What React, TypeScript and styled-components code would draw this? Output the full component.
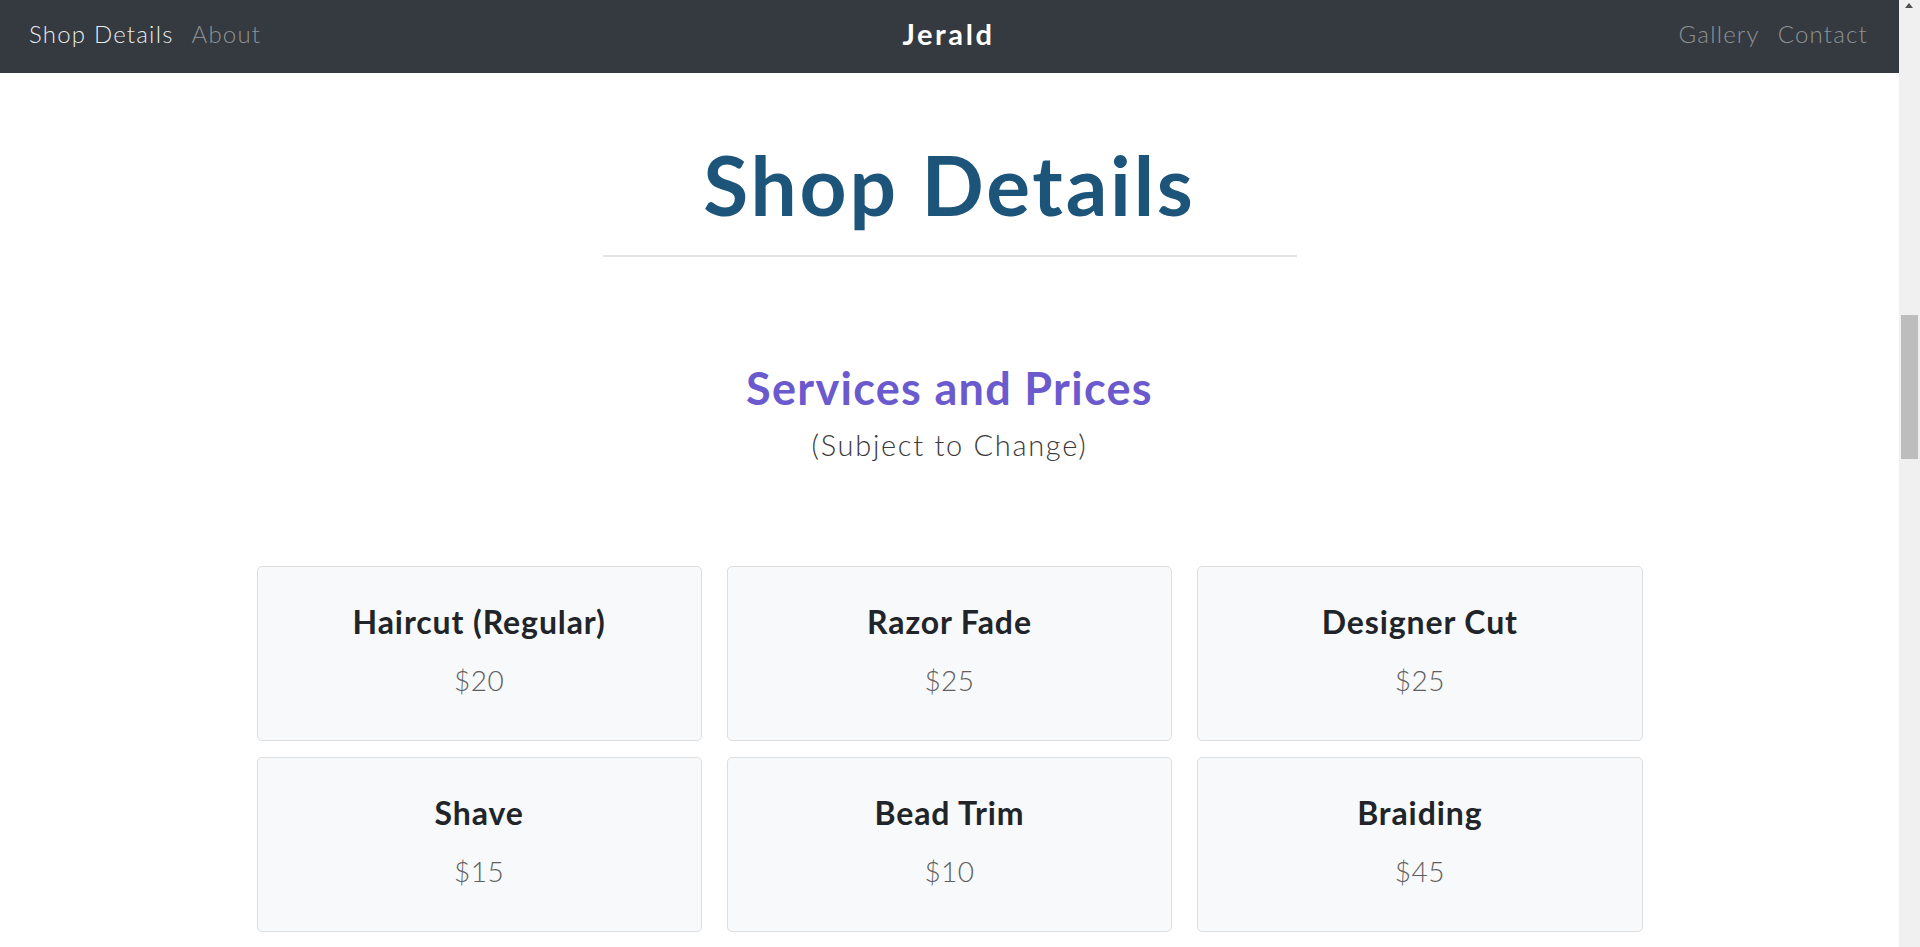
import React from "react";
import styled, { createGlobalStyle } from "styled-components";

const GlobalStyle = createGlobalStyle`
  body {
    margin: 0;
    padding-right: 21px;
    font-family: "Lato", "Liberation Sans", sans-serif;
    background: #ffffff;
    color: #212529;
  }
  * { box-sizing: border-box; }
`;

const ScrollTrack = styled.aside`
  position: fixed;
  top: 0;
  right: 0;
  width: 21px;
  height: 100vh;
  background: #f0f0f0;
`;

const ScrollArrow = styled.span`
  position: absolute;
  top: 3px;
  left: 6px;
  width: 0;
  height: 0;
  border-left: 4.5px solid transparent;
  border-right: 4.5px solid transparent;
  border-bottom: 5px solid #505050;
`;

const ScrollThumb = styled.span`
  position: absolute;
  top: 315px;
  left: 2px;
  width: 17px;
  height: 144px;
  background: #bdbdbd;
`;

const NavBar = styled.nav`
  height: 73px;
  background: #343a40;
  display: grid;
  grid-template-columns: 1fr auto 1fr;
  align-items: center;
  padding: 0 31px 6px 29px;
`;

const NavGroup = styled.div<{ $end?: boolean }>`
  display: flex;
  gap: 18px;
  justify-content: ${(p) => (p.$end ? "flex-end" : "flex-start")};
`;

const NavLink = styled.a<{ $active?: boolean }>`
  font-size: 24px;
  font-weight: 300;
  letter-spacing: 1.2px;
  text-decoration: none;
  color: ${(p) => (p.$active ? "rgba(255,255,255,0.92)" : "rgba(255,255,255,0.45)")};
`;

const Brand = styled.a`
  font-size: 29px;
  font-weight: 700;
  letter-spacing: 2.6px;
  color: #ffffff;
  text-decoration: none;
`;

const Main = styled.main`
  display: flex;
  flex-direction: column;
  align-items: center;
  padding-top: 62px;
`;

const PageTitle = styled.h1`
  margin: 0;
  font-size: 82px;
  line-height: 1.2;
  font-weight: 700;
  letter-spacing: 2.8px;
  color: #1d5479;
`;

const Rule = styled.hr`
  width: 694px;
  margin: 22px 0 0;
  border: 0;
  border-top: 2px solid #e4e4e4;
`;

const SectionTitle = styled.h2`
  margin: 104px 0 0;
  font-size: 45px;
  line-height: 1.2;
  font-weight: 700;
  letter-spacing: 1.3px;
  color: #6a5acd;
`;

const SectionNote = styled.p`
  margin: 13px 0 0;
  font-size: 29px;
  line-height: 1.2;
  font-weight: 300;
  letter-spacing: 1.7px;
  color: #3a3a3a;
`;

const CardGrid = styled.div`
  margin-top: 103px;
  width: 1386px;
  display: grid;
  grid-template-columns: repeat(3, 1fr);
  column-gap: 25px;
  row-gap: 16px;
`;

const Card = styled.div`
  height: 175px;
  background: #f8f9fa;
  border: 1px solid #dddee0;
  border-radius: 5px;
  padding: 36px 20px 0;
  text-align: center;
`;

const CardTitle = styled.h3`
  margin: 0;
  font-size: 32px;
  line-height: 1.2;
  font-weight: 700;
  letter-spacing: 0.9px;
  color: #212529;
`;

const Price = styled.p`
  margin: 22px 0 0;
  font-size: 28px;
  line-height: 1.2;
  font-weight: 300;
  letter-spacing: 0.5px;
  color: #5f5f5f;
`;

const services = [
  { name: "Haircut (Regular)", price: "$20" },
  { name: "Razor Fade", price: "$25" },
  { name: "Designer Cut", price: "$25" },
  { name: "Shave", price: "$15" },
  { name: "Bead Trim", price: "$10" },
  { name: "Braiding", price: "$45" },
];

export default function App() {
  return (
    <>
      <GlobalStyle />
      <NavBar>
        <NavGroup>
          <NavLink href="#" $active>Shop Details</NavLink>
          <NavLink href="#">About</NavLink>
        </NavGroup>
        <Brand href="#">Jerald</Brand>
        <NavGroup $end>
          <NavLink href="#">Gallery</NavLink>
          <NavLink href="#">Contact</NavLink>
        </NavGroup>
      </NavBar>
      <Main>
        <PageTitle>Shop Details</PageTitle>
        <Rule />
        <SectionTitle>Services and Prices</SectionTitle>
        <SectionNote>(Subject to Change)</SectionNote>
        <CardGrid>
          {services.map((s) => (
            <Card key={s.name}>
              <CardTitle>{s.name}</CardTitle>
              <Price>{s.price}</Price>
            </Card>
          ))}
        </CardGrid>
      </Main>
      <ScrollTrack aria-hidden>
        <ScrollArrow />
        <ScrollThumb />
      </ScrollTrack>
    </>
  );
}
